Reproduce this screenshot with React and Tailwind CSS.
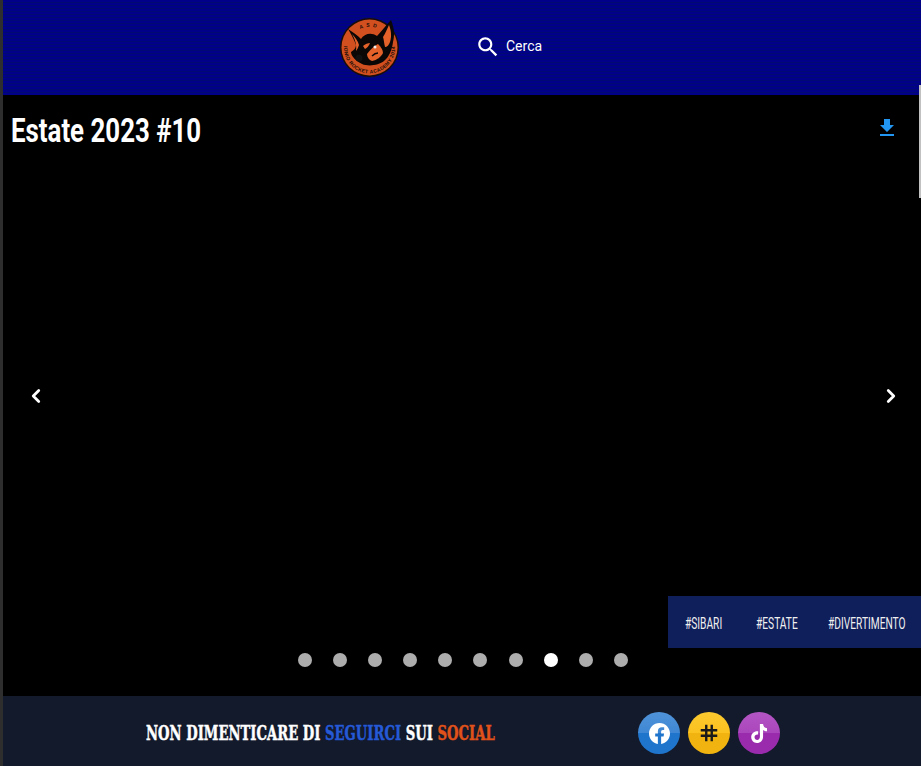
import React from "react";
import { ChevronLeft, ChevronRight } from "lucide-react";

const narrow = { fontFamily: 'Roboto, sans-serif' };

function Logo() {
  return (
    <svg width="62" height="62" viewBox="0 0 62 62" className="block">
      <defs>
        <path id="ringBottom" d="M8.5 18 A25.5 25.5 0 1 0 52.5 18" fill="none" />
        <path id="ringTop" d="M18 14 A21 21 0 0 1 43 14" fill="none" />
      </defs>
      <circle cx="30.5" cy="30.5" r="29.5" fill="#1a0d08" />
      <circle cx="30.5" cy="30.5" r="28" fill="#d2501f" />
      <path d="M9 12 C14 15 19 19 22 22 C25 17 32 15 38 19 C43 14 47 8 52 3 C55 10 56 18 54 25 C53 33 50 40 45 44 C40 48 30 50 23 47 C17 44 12 39 12 35 C15 33 17 31 17 28 C15 22 12 17 9 12 Z" fill="#0a0706" />
      <path d="M50 8 C52 13 53 19 51 25 C50 28 48 30 46 30 C45 26 45 23 44 20 C46 17 48 12 50 8 Z" fill="#e4622a" />
      <path d="M13 17 C16 20 19 24 20 28 C19 31 18 33 17 34 C18 28 16 22 13 17 Z" fill="#e4622a" />
      <path d="M28 37 C31 33 35 29 39 27 C42 30 44 33 44 36 C42 40 38 43 33 44 C30 43 28 40 28 37 Z" fill="#e4622a" />
      <path d="M24 29 C26 27 29 26 31 26 C30 29 28 31 26 32 Z" fill="#e4622a" />
      <path d="M33 39 C35 37 37 36 39 36" fill="none" stroke="#0a0706" strokeWidth="1.4" />
      <circle cx="36" cy="30" r="1.5" fill="#eee" />
      <circle cx="20" cy="41" r="3.5" fill="#111" />
      <text fontSize="5" fontWeight="700" fill="#1a0d08" style={{ fontFamily: '"Liberation Sans", sans-serif' }} letterSpacing="0.3">
        <textPath href="#ringBottom" startOffset="50%" textAnchor="middle">IONIO ROCKET ACADEMY 2014</textPath>
      </text>
      <text fontSize="5" fontWeight="700" fill="#1a0d08" letterSpacing="3" style={{ fontFamily: '"Liberation Sans", sans-serif' }}>
        <textPath href="#ringTop" startOffset="50%" textAnchor="middle">ASD</textPath>
      </text>
    </svg>
  );
}

function Dot({ active }) {
  return <span className={active ? "block w-[14px] h-[14px] rounded-full bg-white" : "block w-[14px] h-[14px] rounded-full bg-[#adadad]"} />;
}

export default function App() {
  const dots = [0, 1, 2, 3, 4, 5, 6, 7, 8, 9];
  return (
    <div className="relative w-[921px] h-[766px] overflow-hidden bg-black flex" style={{ fontFamily: 'Roboto, sans-serif' }}>
      <div className="w-[3px] shrink-0 bg-[#2e2e2e]" />
      <div className="flex-1 min-w-0 flex flex-col">
        <header className="h-[95px] shrink-0 flex items-center bg-[repeating-linear-gradient(180deg,#00008b_0,#00008b_2px,#000a70_2px,#000a70_3px)]">
          <div className="ml-[336px] w-[62px] h-[62px]"><Logo /></div>
          <div className="ml-[74px] -mt-[2px] flex items-center text-white">
            <svg width="26" height="26" viewBox="0 0 24 24" fill="#fff"><path d="M15.5 14h-.79l-.28-.27C15.41 12.59 16 11.11 16 9.5 16 5.91 13.09 3 9.5 3S3 5.91 3 9.5 5.91 16 9.5 16c1.61 0 3.09-.59 4.23-1.57l.27.28v.79l5 4.99L20.49 19l-4.99-5zm-6 0C7.01 14 5 11.99 5 9.5S7.01 5 9.5 5 14 7.01 14 9.5 11.99 14 9.5 14z" /></svg>
            <span className="ml-[5px] text-[14px]">Cerca</span>
          </div>
        </header>
        <main className="relative flex-1 min-h-0 bg-black">
          <h1 className="absolute left-[8px] top-[13px] text-white text-[34px] font-bold leading-[44px] whitespace-nowrap origin-left scale-x-[0.76]" style={narrow}>Estate 2023 #10</h1>
          <svg className="absolute left-[872px] top-[21px]" width="24" height="24" viewBox="0 0 24 24" fill="#2196f3"><path d="M19 9h-4V3H9v6H5l7 7 7-7zM5 18v2h14v-2H5z" /></svg>
          <ChevronLeft className="absolute left-[22px] top-[290px] text-white" size={22} strokeWidth={3} />
          <ChevronRight className="absolute left-[877px] top-[290px] text-white" size={22} strokeWidth={3} />
          <div className="absolute left-[665px] right-0 top-[501px] h-[52px] pt-[3px] bg-[#0f1f5c] flex items-center pl-[17px] text-[#f0f0f0] text-[17px] font-normal whitespace-nowrap" style={narrow}>
            <span className="w-[71px] origin-left scale-x-[0.6]">#SIBARI</span>
            <span className="w-[72px] origin-left scale-x-[0.6]">#ESTATE</span>
            <span className="w-[79px] origin-left scale-x-[0.6]">#DIVERTIMENTO</span>
          </div>
          <div className="absolute left-[295px] top-[558px] flex gap-[21.1px]">
            {dots.map((d) => <Dot key={d} active={d === 7} />)}
          </div>
        </main>
        <footer className="h-[70px] shrink-0 bg-[#121a2b] flex items-center pt-[4px]">
          <div className="ml-[143px] w-[492px] text-white font-bold text-[21px] whitespace-nowrap origin-left scale-x-[0.628] [-webkit-text-stroke:0.5px_currentColor]" style={{ fontFamily: '"DejaVu Serif",serif' }}>
            NON DIMENTICARE DI <span className="text-[#2559d6]">SEGUIRCI</span> SUI <span className="text-[#e0521a]">SOCIAL</span>
          </div>
          <div className="flex gap-[8px]">
            <span className="w-[42px] h-[42px] rounded-full flex items-center justify-center bg-[linear-gradient(180deg,#4f93d9_0,#3f87d4_50%,#1f74cc_50%,#1f74cc_100%)]">
              <svg width="21" height="21" viewBox="0 0 24 24" fill="#fff"><path d="M24 12.07C24 5.4 18.63 0 12 0S0 5.4 0 12.07c0 6.03 4.39 11.02 10.13 11.93v-8.44H7.08v-3.49h3.05V9.41c0-3.02 1.79-4.69 4.53-4.69 1.31 0 2.68.24 2.68.24v2.96h-1.51c-1.49 0-1.96.93-1.96 1.88v2.27h3.33l-.53 3.49h-2.8V24C19.61 23.09 24 18.1 24 12.07z" /></svg>
            </span>
            <span className="w-[42px] h-[42px] rounded-full flex items-center justify-center bg-[linear-gradient(180deg,#fbc92f_0,#fbc21f_50%,#f0b30f_50%,#f0b30f_100%)]">
              <svg width="22" height="22" viewBox="0 0 24 24" fill="none" stroke="#1a1a1a" strokeWidth="2.6"><path d="M3 9h18M3 15h18M9 3v18M15 3v18" /></svg>
            </span>
            <span className="w-[42px] h-[42px] rounded-full flex items-center justify-center bg-[linear-gradient(180deg,#b455c4_0,#a946bc_50%,#9a2bad_50%,#9a2bad_100%)]">
              <svg width="19" height="19" viewBox="0 0 24 24" fill="#fff"><path d="M12.5 0h4c.2 3 2 5 5 5.3v4c-1.9 0-3.6-.6-5-1.6v8.3c0 4.4-3.2 8-7.8 8C4.6 24 1.5 20.6 1.5 16.5c0-4.6 4-8 8.8-7.4v4.2c-2.4-.5-4.6 1-4.6 3.3 0 2 1.6 3.5 3.4 3.5 2 0 3.4-1.6 3.4-3.6z" /></svg>
            </span>
          </div>
        </footer>
      </div>
      <div className="absolute right-0 top-[85px] w-[2px] h-[113px] bg-[#c1c1c1]" />
    </div>
  );
}
